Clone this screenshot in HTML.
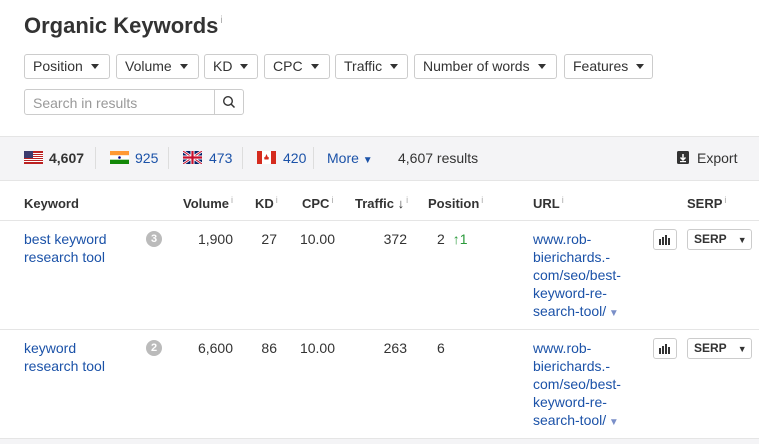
<!DOCTYPE html>
<html><head><style>
*{margin:0;padding:0;box-sizing:border-box}
body{width:759px;height:444px;overflow:hidden;background:#fff;font-family:"Liberation Sans",Arial,sans-serif;font-size:14px;color:#333;position:relative}
.a{position:absolute;white-space:nowrap}
.btn{position:absolute;top:54px;height:25px;border:1px solid #ccc;border-radius:3px;padding:0 0 0 8px;line-height:23px;font-size:14px;color:#333;background:#fff;white-space:nowrap;overflow:hidden}
.btn:after{content:"";display:inline-block;margin-left:8px;border-left:4px solid transparent;border-right:4px solid transparent;border-top:5px solid #333;vertical-align:2px}
.bl{color:#1b52a8}
.h{font-weight:bold;font-size:13px;color:#333}
.i{font-size:9px;color:#aaa;font-weight:normal;position:relative;top:-5px;margin-left:2px;line-height:0}
.sep{position:absolute;top:147px;width:1px;height:22px;background:#ddd}
.flag{position:absolute;top:151px;width:19px;height:13px}
.r{position:absolute;white-space:nowrap;text-align:right;width:60px}
</style></head><body>
<div class="a" style="left:24px;top:13px;font-size:22px;font-weight:bold;color:#333">Organic Keywords<span class="i" style="font-size:10px;top:-10px">i</span></div>
<div class="btn" style="left:24px;width:86px">Position</div>
<div class="btn" style="left:116px;width:83px">Volume</div>
<div class="btn" style="left:204px;width:54px">KD</div>
<div class="btn" style="left:264px;width:66px">CPC</div>
<div class="btn" style="left:335px;width:73px">Traffic</div>
<div class="btn" style="left:414px;width:143px">Number of words</div>
<div class="btn" style="left:564px;width:89px">Features</div>
<div class="a" style="left:24px;top:89px;width:220px;height:26px;border:1px solid #ccc;border-radius:3px"></div>
<div class="a" style="left:214px;top:89px;width:1px;height:26px;background:#ccc"></div>
<div class="a" style="left:33px;top:95px;color:#999">Search in results</div>
<svg class="a" style="left:222px;top:95px" width="14" height="14" viewBox="0 0 14 14"><circle cx="6" cy="6" r="4.3" fill="none" stroke="#333" stroke-width="1.4"/><line x1="9" y1="9" x2="12.5" y2="12.5" stroke="#333" stroke-width="1.5"/></svg>
<div class="a" style="left:0;top:136px;width:759px;height:45px;background:#f4f4f6;border-top:1px solid #e5e5e5;border-bottom:1px solid #e5e5e5"></div>
<svg class="flag" style="left:24px" viewBox="0 0 19 13"><rect width="19" height="13" fill="#b22"/><g fill="#fff"><rect y="2" width="19" height="1"/><rect y="4" width="19" height="1"/><rect y="6" width="19" height="1"/><rect y="8" width="19" height="1"/><rect y="10" width="19" height="1"/></g><rect width="9" height="7" fill="#3c3b6e"/></svg>
<div class="a" style="left:49px;top:150px;font-weight:bold">4,607</div>
<div class="sep" style="left:95px"></div>
<svg class="flag" style="left:110px" viewBox="0 0 19 13"><rect width="19" height="4.3" fill="#f93"/><rect y="4.3" width="19" height="4.4" fill="#fff"/><rect y="8.7" width="19" height="4.3" fill="#138808"/><circle cx="9.5" cy="6.5" r="1.3" fill="#008"/></svg>
<div class="a bl" style="left:135px;top:150px">925</div>
<div class="sep" style="left:168px"></div>
<svg class="flag" style="left:183px" viewBox="0 0 19 13"><rect width="19" height="13" fill="#012169"/><path d="M0 0L19 13M19 0L0 13" stroke="#fff" stroke-width="2.6"/><path d="M0 0L19 13M19 0L0 13" stroke="#c8102e" stroke-width="1"/><path d="M9.5 0V13M0 6.5H19" stroke="#fff" stroke-width="4"/><path d="M9.5 0V13M0 6.5H19" stroke="#c8102e" stroke-width="2.2"/></svg>
<div class="a bl" style="left:209px;top:150px">473</div>
<div class="sep" style="left:242px"></div>
<svg class="flag" style="left:257px" viewBox="0 0 19 13"><rect width="19" height="13" fill="#fff"/><rect width="5" height="13" fill="#d52b1e"/><rect x="14" width="5" height="13" fill="#d52b1e"/><path d="M9.5 3L11 6.5L12 6L11.5 8.5L9.5 8.5L7.5 8.5L7 6L8 6.5Z" fill="#d52b1e"/></svg>
<div class="a bl" style="left:283px;top:150px">420</div>
<div class="sep" style="left:313px"></div>
<div class="a bl" style="left:327px;top:150px;font-size:14px">More <span style="font-size:10px">▼</span></div>
<div class="a" style="left:398px;top:150px">4,607 results</div>
<svg class="a" style="left:677px;top:151px" width="12" height="13" viewBox="0 0 12 13"><rect x="0" y="0" width="12" height="13" rx="1.5" fill="#333"/><path d="M6 3V8.5M3.5 6.5L6 9L8.5 6.5" stroke="#fff" stroke-width="1.5" fill="none"/><rect x="3" y="10" width="6" height="1.2" fill="#fff"/></svg>
<div class="a" style="left:697px;top:150px;font-size:14px">Export</div>
<div class="a h" style="left:24px;top:196px">Keyword</div>
<div class="a h" style="left:183px;top:196px">Volume<span class="i">i</span></div>
<div class="a h" style="left:255px;top:196px">KD<span class="i">i</span></div>
<div class="a h" style="left:302px;top:196px">CPC<span class="i">i</span></div>
<div class="a h" style="left:355px;top:196px">Traffic<span style="font-size:13px;line-height:0"> ↓</span><span class="i">i</span></div>
<div class="a h" style="left:428px;top:196px">Position<span class="i">i</span></div>
<div class="a h" style="left:533px;top:196px">URL<span class="i">i</span></div>
<div class="a h" style="left:687px;top:196px">SERP<span class="i">i</span></div>
<div class="a" style="left:0;top:220px;width:759px;height:1px;background:#e5e5e5"></div>
<div class="a" style="left:0;top:329px;width:759px;height:1px;background:#e5e5e5"></div>
<div class="a" style="left:0;top:438px;width:759px;height:6px;background:#f4f4f6;border-top:1px solid #e5e5e5"></div>

<div class="a bl" style="left:24px;top:230px;line-height:18px">best keyword<br>research tool</div>
<div class="a" style="left:146px;top:231px;width:16px;height:16px;border-radius:8px;background:#bbb;color:#fff;font-size:11px;font-weight:bold;text-align:center;line-height:16px">3</div>
<div class="r" style="left:173px;top:231px">1,900</div>
<div class="r" style="left:217px;top:231px">27</div>
<div class="r" style="left:275px;top:231px">10.00</div>
<div class="r" style="left:347px;top:231px">372</div>
<div class="a" style="left:437px;top:231px">2 <span style="color:#2a9a3a;margin-left:4px">↑1</span></div>
<div class="a bl" style="left:533px;top:230px;line-height:18px">www.rob-<br>bierichards.-<br>com/seo/best-<br>keyword-re-<br>search-tool/<span style="color:#7a8fc8;font-size:10px"> ▼</span></div>
<div class="a" style="left:653px;top:229px;width:24px;height:21px;border:1px solid #ccc;border-radius:3px"></div>
<svg class="a" style="left:659px;top:234px" width="12" height="11"><g fill="#333"><rect x="0" y="5" width="2" height="6"/><rect x="3" y="3" width="2" height="8"/><rect x="6" y="1" width="2" height="10"/><rect x="9" y="4" width="2" height="7"/></g></svg>
<div class="a" style="left:687px;top:229px;width:65px;height:21px;border:1px solid #ccc;border-radius:3px;font-weight:bold;font-size:12px;line-height:19px;padding-left:6px">SERP<span style="font-size:9px;margin-left:11px">▼</span></div>

<div class="a bl" style="left:24px;top:339px;line-height:18px">keyword<br>research tool</div>
<div class="a" style="left:146px;top:340px;width:16px;height:16px;border-radius:8px;background:#bbb;color:#fff;font-size:11px;font-weight:bold;text-align:center;line-height:16px">2</div>
<div class="r" style="left:173px;top:340px">6,600</div>
<div class="r" style="left:217px;top:340px">86</div>
<div class="r" style="left:275px;top:340px">10.00</div>
<div class="r" style="left:347px;top:340px">263</div>
<div class="a" style="left:437px;top:340px">6</div>
<div class="a bl" style="left:533px;top:339px;line-height:18px">www.rob-<br>bierichards.-<br>com/seo/best-<br>keyword-re-<br>search-tool/<span style="color:#7a8fc8;font-size:10px"> ▼</span></div>
<div class="a" style="left:653px;top:338px;width:24px;height:21px;border:1px solid #ccc;border-radius:3px"></div>
<svg class="a" style="left:659px;top:343px" width="12" height="11"><g fill="#333"><rect x="0" y="5" width="2" height="6"/><rect x="3" y="3" width="2" height="8"/><rect x="6" y="1" width="2" height="10"/><rect x="9" y="4" width="2" height="7"/></g></svg>
<div class="a" style="left:687px;top:338px;width:65px;height:21px;border:1px solid #ccc;border-radius:3px;font-weight:bold;font-size:12px;line-height:19px;padding-left:6px">SERP<span style="font-size:9px;margin-left:11px">▼</span></div>
</body></html>
